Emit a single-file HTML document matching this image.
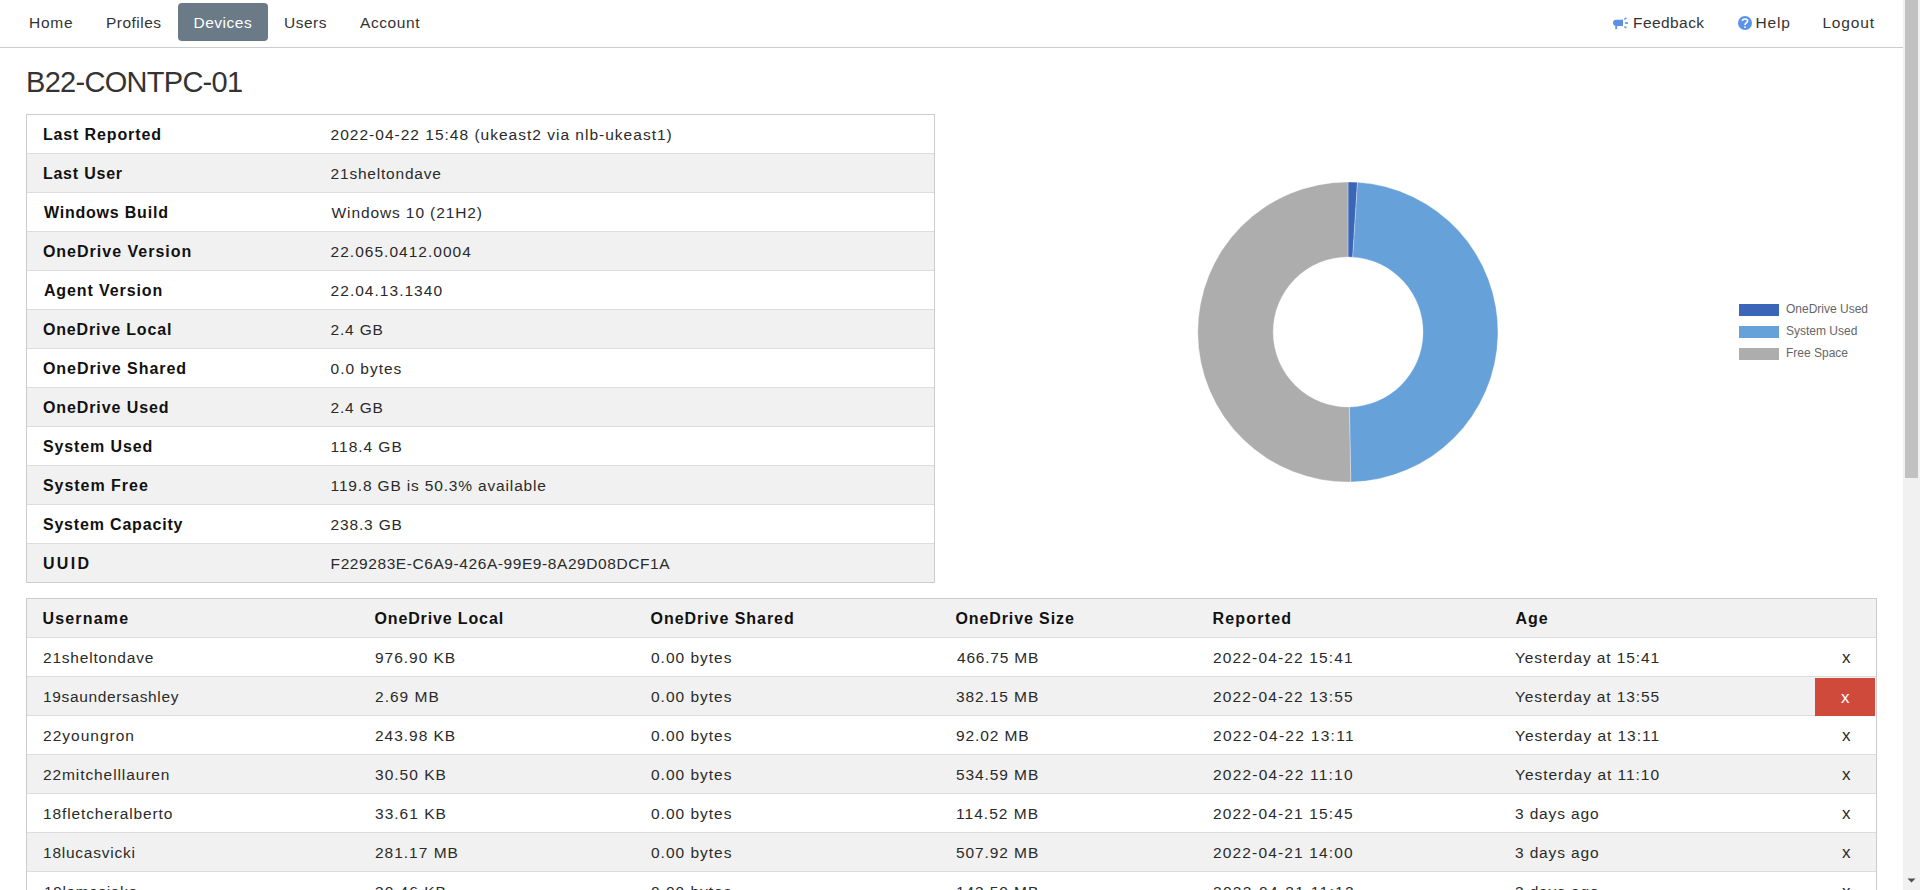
<!DOCTYPE html><html><head><meta charset="utf-8"><style>
*{box-sizing:border-box}
html,body{margin:0;padding:0;background:#fff}
body{width:1920px;height:890px;overflow:hidden;position:relative;font-family:"Liberation Sans", sans-serif;color:#222;font-size:15.5px}
.a{position:absolute;white-space:pre}
.nav{position:absolute;left:0;top:0;width:1903px;height:48px;border-bottom:1px solid #cccccc}
.ni{position:absolute;top:0px;font-size:15.5px;line-height:46px;color:#333;white-space:pre}
.act{position:absolute;left:178px;top:3px;width:90px;height:38px;border-radius:4px;background:#6a7a87}
.title{position:absolute;top:62px;font-size:29px;line-height:40px;color:#333;white-space:pre}
.tb{position:absolute;border:1px solid #cccccc;background:transparent}
.row{position:absolute;left:0;height:39px;border-bottom:1px solid #dddddd}
.row.g{background:#f1f1f1}
.row.last{border-bottom:none;height:38px}
.c{position:absolute;top:0;line-height:38px;padding-top:1px;white-space:pre;color:#2a2a2a}
.c.b{font-weight:bold;color:#111;font-size:16px}
.sb{position:absolute;left:1903px;top:0;width:17px;height:890px;background:#f1f1f1}
.th{position:absolute;left:1905px;top:0;width:13px;height:478px;background:#c1c1c1}
.lg{position:absolute;left:1739px;width:40px;height:12px}
.lt{position:absolute;left:1786px;font-size:12px;line-height:14px;color:#666}
</style></head><body>
<div class="nav">
<div class="act"></div>
<div class="ni" style="left:29.0px;color:#333;letter-spacing:0.767px">Home</div>
<div class="ni" style="left:106.0px;color:#333;letter-spacing:0.486px">Profiles</div>
<div class="ni" style="left:193.5px;color:#fff;letter-spacing:0.5px">Devices</div>
<div class="ni" style="left:284.0px;color:#333;letter-spacing:0.5px">Users</div>
<div class="ni" style="left:360.0px;color:#333;letter-spacing:0.583px">Account</div>
<div class="ni" style="left:1633.0px;color:#333;letter-spacing:0.429px">Feedback</div>
<div class="ni" style="left:1755.5px;color:#333;letter-spacing:0.867px">Help</div>
<div class="ni" style="left:1822.4px;color:#333;letter-spacing:0.86px">Logout</div>
<svg class="a" style="left:1606px;top:10px" width="30" height="26" viewBox="0 0 30 26">
<path d="M10.2,9.7 H15 L16.8,9.4 H17 V16.2 H16.8 L15,16 H10.2 A3.15,3.15 0 0 1 10.2,9.7 Z" fill="#5b8fe8"/>
<rect x="9.2" y="15.5" width="2" height="3.6" fill="#6398ea"/>
<path d="M18.3,9.3 L20.4,7.9 M18.3,16.6 L20.4,17.8" stroke="#6398ea" stroke-width="1.6"/>
<rect x="19" y="12.2" width="3" height="1.7" fill="#6398ea"/>
</svg>
<svg class="a" style="left:1738px;top:16px" width="14" height="14" viewBox="0 0 14 14">
<circle cx="7" cy="7" r="7" fill="#5c93e9"/>
<path d="M4.4,5 C4.4,2.3 9.6,2.3 9.6,5 C9.6,6.9 7,7 7,9" stroke="#fff" stroke-width="1.7" fill="none"/>
<rect x="6.1" y="10.2" width="1.8" height="1.7" fill="#e8f0fc"/>
</svg>
</div>
<div class="title" style="left:26px;letter-spacing:-0.708px">B22-CONTPC-01</div>
<div class="tb" style="left:26px;top:114px;width:909px;height:469px">
<div class="row" style="top:0px;width:907px"><span class="c b" style="left:15.90px;letter-spacing:0.875px">Last Reported</span><span class="c" style="left:303.60px;letter-spacing:1.007px">2022-04-22 15:48 (ukeast2 via nlb-ukeast1)</span></div>
<div class="row g" style="top:39px;width:907px"><span class="c b" style="left:15.90px;letter-spacing:0.781px">Last User</span><span class="c" style="left:303.60px;letter-spacing:0.792px">21sheltondave</span></div>
<div class="row" style="top:78px;width:907px"><span class="c b" style="left:16.90px;letter-spacing:0.792px">Windows Build</span><span class="c" style="left:304.60px;letter-spacing:0.887px">Windows 10 (21H2)</span></div>
<div class="row g" style="top:117px;width:907px"><span class="c b" style="left:15.90px;letter-spacing:1.0px">OneDrive Version</span><span class="c" style="left:303.60px;letter-spacing:1.02px">22.065.0412.0004</span></div>
<div class="row" style="top:156px;width:907px"><span class="c b" style="left:16.90px;letter-spacing:0.896px">Agent Version</span><span class="c" style="left:303.60px;letter-spacing:1.025px">22.04.13.1340</span></div>
<div class="row g" style="top:195px;width:907px"><span class="c b" style="left:15.90px;letter-spacing:0.862px">OneDrive Local</span><span class="c" style="left:303.60px;letter-spacing:0.8px">2.4 GB</span></div>
<div class="row" style="top:234px;width:907px"><span class="c b" style="left:15.90px;letter-spacing:0.957px">OneDrive Shared</span><span class="c" style="left:303.60px;letter-spacing:0.975px">0.0 bytes</span></div>
<div class="row g" style="top:273px;width:907px"><span class="c b" style="left:15.90px;letter-spacing:0.917px">OneDrive Used</span><span class="c" style="left:303.60px;letter-spacing:0.8px">2.4 GB</span></div>
<div class="row" style="top:312px;width:907px"><span class="c b" style="left:15.90px;letter-spacing:0.89px">System Used</span><span class="c" style="left:303.60px;letter-spacing:0.971px">118.4 GB</span></div>
<div class="row g" style="top:351px;width:907px"><span class="c b" style="left:15.90px;letter-spacing:0.98px">System Free</span><span class="c" style="left:303.60px;letter-spacing:0.838px">119.8 GB is 50.3% available</span></div>
<div class="row" style="top:390px;width:907px"><span class="c b" style="left:15.90px;letter-spacing:0.821px">System Capacity</span><span class="c" style="left:303.60px;letter-spacing:0.829px">238.3 GB</span></div>
<div class="row g last" style="top:429px;width:907px"><span class="c b" style="left:15.90px;letter-spacing:2.367px">UUID</span><span class="c" style="left:303.60px;letter-spacing:0.577px">F229283E-C6A9-426A-99E9-8A29D08DCF1A</span></div>
</div>
<div class="tb" style="left:26px;top:598px;width:1851px;height:323px;border-bottom:none">
<div class="row g" style="top:0;width:1849px"><span class="c b" style="left:15.50px;letter-spacing:1.171px">Username</span><span class="c b" style="left:347.50px;letter-spacing:0.862px">OneDrive Local</span><span class="c b" style="left:623.50px;letter-spacing:0.957px">OneDrive Shared</span><span class="c b" style="left:928.50px;letter-spacing:0.892px">OneDrive Size</span><span class="c b" style="left:1185.50px;letter-spacing:1.186px">Reported</span><span class="c b" style="left:1488.50px;letter-spacing:1.0px">Age</span></div>
<div class="row" style="top:39px;width:1849px"><span class="c" style="left:16.00px;letter-spacing:0.792px">21sheltondave</span><span class="c" style="left:348.00px;letter-spacing:0.975px">976.90 KB</span><span class="c" style="left:624.00px;letter-spacing:0.989px">0.00 bytes</span><span class="c" style="left:930.00px;letter-spacing:0.787px">466.75 MB</span><span class="c" style="left:1186.00px;letter-spacing:1.153px">2022-04-22 15:41</span><span class="c" style="left:1488.00px;letter-spacing:0.912px">Yesterday at 15:41</span><span class="c" style="left:1815px;font-size:17px">x</span></div>
<div class="row g" style="top:78px;width:1849px"><span class="c" style="left:16.00px;letter-spacing:0.64px">19saundersashley</span><span class="c" style="left:348.00px;letter-spacing:1.017px">2.69 MB</span><span class="c" style="left:624.00px;letter-spacing:0.989px">0.00 bytes</span><span class="c" style="left:929.00px;letter-spacing:0.912px">382.15 MB</span><span class="c" style="left:1186.00px;letter-spacing:1.153px">2022-04-22 13:55</span><span class="c" style="left:1488.00px;letter-spacing:0.912px">Yesterday at 13:55</span><span class="a" style="left:1788px;top:1px;width:60px;height:38px;background:#cf4a3a"></span><span class="c" style="left:1814px;top:1px;color:#fff;font-size:17px">x</span></div>
<div class="row" style="top:117px;width:1849px"><span class="c" style="left:16.00px;letter-spacing:1.011px">22youngron</span><span class="c" style="left:348.00px;letter-spacing:0.975px">243.98 KB</span><span class="c" style="left:624.00px;letter-spacing:0.989px">0.00 bytes</span><span class="c" style="left:929.00px;letter-spacing:0.9px">92.02 MB</span><span class="c" style="left:1186.00px;letter-spacing:1.287px">2022-04-22 13:11</span><span class="c" style="left:1488.00px;letter-spacing:0.971px">Yesterday at 13:11</span><span class="c" style="left:1815px;font-size:17px">x</span></div>
<div class="row g" style="top:156px;width:1849px"><span class="c" style="left:16.00px;letter-spacing:0.907px">22mitchelllauren</span><span class="c" style="left:348.00px;letter-spacing:1.014px">30.50 KB</span><span class="c" style="left:624.00px;letter-spacing:0.989px">0.00 bytes</span><span class="c" style="left:929.00px;letter-spacing:0.912px">534.59 MB</span><span class="c" style="left:1186.00px;letter-spacing:1.22px">2022-04-22 11:10</span><span class="c" style="left:1488.00px;letter-spacing:0.971px">Yesterday at 11:10</span><span class="c" style="left:1815px;font-size:17px">x</span></div>
<div class="row" style="top:195px;width:1849px"><span class="c" style="left:16.00px;letter-spacing:0.869px">18fletcheralberto</span><span class="c" style="left:348.00px;letter-spacing:1.014px">33.61 KB</span><span class="c" style="left:624.00px;letter-spacing:0.989px">0.00 bytes</span><span class="c" style="left:929.00px;letter-spacing:1.037px">114.52 MB</span><span class="c" style="left:1186.00px;letter-spacing:1.153px">2022-04-21 15:45</span><span class="c" style="left:1488.00px;letter-spacing:0.856px">3 days ago</span><span class="c" style="left:1815px;font-size:17px">x</span></div>
<div class="row g" style="top:234px;width:1849px"><span class="c" style="left:16.00px;letter-spacing:0.755px">18lucasvicki</span><span class="c" style="left:348.00px;letter-spacing:0.988px">281.17 MB</span><span class="c" style="left:624.00px;letter-spacing:0.989px">0.00 bytes</span><span class="c" style="left:929.00px;letter-spacing:0.912px">507.92 MB</span><span class="c" style="left:1186.00px;letter-spacing:1.153px">2022-04-21 14:00</span><span class="c" style="left:1488.00px;letter-spacing:0.856px">3 days ago</span><span class="c" style="left:1815px;font-size:17px">x</span></div>
<div class="row" style="top:273px;width:1849px"><span class="c" style="left:17.00px;letter-spacing:0.6px">19lomasjake</span><span class="c" style="left:348.00px;letter-spacing:1.014px">30.46 KB</span><span class="c" style="left:624.00px;letter-spacing:0.989px">0.00 bytes</span><span class="c" style="left:929.00px;letter-spacing:0.912px">143.50 MB</span><span class="c" style="left:1186.00px;letter-spacing:1.287px">2022-04-21 11:12</span><span class="c" style="left:1488.00px;letter-spacing:0.856px">3 days ago</span><span class="c" style="left:1815px;font-size:17px">x</span></div>
</div>
<svg class="a" style="left:0;top:0" width="1903" height="890"><path d="M1348.00,182.00 A150,150 0 0 1 1357.49,182.30 L1352.74,257.15 A75,75 0 0 0 1348.00,257.00 Z" fill="#3b66b7" stroke="#fff" stroke-opacity="0.3" stroke-width="1"/><path d="M1357.49,182.30 A150,150 0 0 1 1350.77,481.97 L1349.38,406.99 A75,75 0 0 0 1352.74,257.15 Z" fill="#66a1d9" stroke="#fff" stroke-opacity="0.3" stroke-width="1"/><path d="M1350.77,481.97 A150,150 0 1 1 1348.00,182.00 L1348.00,257.00 A75,75 0 1 0 1349.38,406.99 Z" fill="#adadad" stroke="#fff" stroke-opacity="0.3" stroke-width="1"/></svg>
<div class="lg" style="top:304px;background:#3b66b7"></div><div class="lt" style="top:302px">OneDrive Used</div>
<div class="lg" style="top:326px;background:#66a1d9"></div><div class="lt" style="top:324px">System Used</div>
<div class="lg" style="top:348px;background:#adadad"></div><div class="lt" style="top:346px">Free Space</div>
<div class="sb"></div><div class="th"></div>
<svg class="a" style="left:1903px;top:872px" width="17" height="17"><path d="M4.5 6.5 H12.5 L8.5 10.5 Z" fill="#505050"/></svg>
</body></html>
